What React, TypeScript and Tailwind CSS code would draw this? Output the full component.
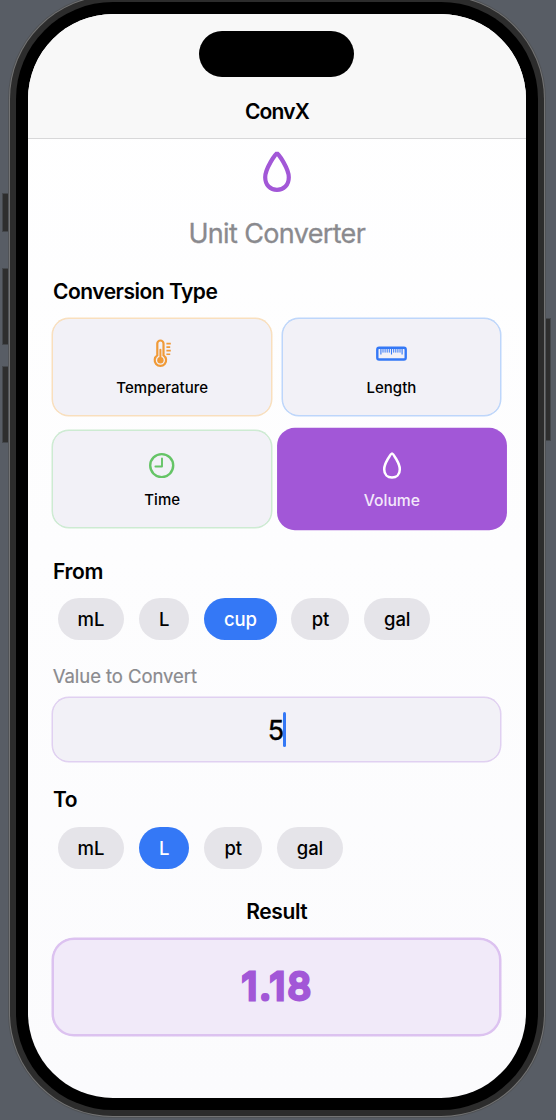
import type { ReactNode } from "react";

function Drop({ className, stroke }: { className: string; stroke: number }) {
  return (
    <svg viewBox="0 0 28 41" fill="none" stroke="currentColor" strokeWidth={stroke} strokeLinejoin="round" className={className}>
      <path d="M14 2.4C12.6 2.4 2.2 17.8 2.2 26.2C2.2 34.2 7.4 38.8 14 38.8S25.8 34.2 25.8 26.2C25.8 17.8 15.4 2.4 14 2.4Z" />
    </svg>
  );
}

function Thermometer() {
  return (
    <svg viewBox="0 0 18 29" fill="none" stroke="currentColor" className="h-[29px] w-[18px] text-[#f09a37]">
      <path d="M4.3 16.4V4.6a3.1 3.1 0 0 1 6.2 0v11.8a5.7 5.7 0 1 1-6.2 0Z" strokeWidth="2.2" />
      <path d="M7.4 10.8v9" strokeWidth="2" strokeLinecap="round" />
      <circle cx="7.4" cy="21.3" r="3.2" fill="currentColor" stroke="none" />
      <path d="M13.4 4.6h4.4M13.4 8.1h3.8M13.4 11.6h4.4M13.4 15.2h3.8" strokeWidth="1.6" />
    </svg>
  );
}

function Ruler() {
  return (
    <svg viewBox="0 0 31 15" fill="none" stroke="currentColor" className="h-[15px] w-[31px] text-[#3478f6]">
      <rect x="1.3" y="1.7" width="28.4" height="11.8" rx="1.8" strokeWidth="2.4" />
      <path d="M4.9 2v6.6M15.5 2v6.6M26.1 2v6.6" strokeWidth="1.1" />
      <path d="M7 2v4.6M9.1 2v4.6M11.2 2v4.6M13.3 2v4.6M17.7 2v4.6M19.8 2v4.6M21.9 2v4.6M24 2v4.6" strokeWidth="1" />
    </svg>
  );
}

function Clock() {
  return (
    <svg viewBox="0 0 26 26" fill="none" stroke="currentColor" className="size-[26px] text-[#65c466]">
      <circle cx="12.7" cy="13.6" r="11.5" strokeWidth="2.4" />
      <path d="M13 6.4v8.1H6.4" strokeWidth="1.9" strokeLinecap="round" strokeLinejoin="round" />
    </svg>
  );
}

function TypeCard({ label, border, children }: { label: string; border: string; children: ReactNode }) {
  return (
    <div className={`flex h-[98px] flex-col items-center rounded-[17px] border bg-[#f2f1f7] pt-[19px] ${border}`}>
      <div className="flex h-[30px] items-center">{children}</div>
      <span className="mt-[10px] text-[15px] leading-[20px] font-medium tracking-[0.02px]">{label}</span>
    </div>
  );
}

const pillWidths: Record<string, string> = {
  mL: "w-[66.5px]",
  L: "w-[50.5px]",
  cup: "w-[72.5px]",
  pt: "w-[58px]",
  gal: "w-[66px]",
};

function Pills({ units, selected }: { units: string[]; selected: string }) {
  return (
    <div className="flex h-[42px] gap-[14.75px] pl-[5.3px]">
      {units.map((u) => (
        <button
          key={u}
          className={`h-[42px] rounded-full pt-px text-[18.5px] font-medium tracking-[-0.1px] ${pillWidths[u]} ${
            u === selected ? "bg-[#3478f6] text-white" : "bg-[#e5e4e9] text-black"
          }`}
        >
          {u}
        </button>
      ))}
    </div>
  );
}

export default function App() {
  return (
    <div className="relative flex h-[1120px] w-[556px] items-start overflow-hidden bg-[#585d65] pl-[8px] font-['Inter',sans-serif] text-black">
      <div className="absolute top-[193px] left-[2px] h-[39px] w-[6px] border-y border-l border-[#44474b] bg-[#2e2e2e]" />
      <div className="absolute top-[268px] left-[2px] h-[77px] w-[6px] border-y border-l border-[#44474b] bg-[#2e2e2e]" />
      <div className="absolute top-[366px] left-[2px] h-[77px] w-[6px] border-y border-l border-[#44474b] bg-[#2e2e2e]" />
      <div className="absolute top-[318px] left-[545px] h-[123px] w-[6px] border-y border-r border-[#44474b] bg-[#2e2e2e]" />

      <div className="relative -mt-[6px] rounded-[105px] bg-[#505357] p-px">
        <div className="rounded-[104px] bg-[#747474] p-px">
          <div className="rounded-[103px] bg-[#2c2c2c] p-[6px]">
            <div className="rounded-[97px] bg-black p-[12px]">
              <div className="flex h-[1084px] w-[498px] flex-col overflow-hidden rounded-[85px] bg-linear-to-b from-white to-[#fbfbfd]">
                <header className="flex h-[125px] shrink-0 flex-col items-center border-b border-[#d8d8d9] bg-[#f8f8f8] pt-[17px]">
                  <div className="mr-px h-[46px] w-[155px] rounded-full bg-black" />
                  <h1 className="mt-[22px] text-[21px] leading-[26px] font-semibold tracking-[-0.8px]">ConvX</h1>
                </header>

                <main className="flex flex-col pr-[24.8px] pl-[24.4px]">
                  <div className="flex justify-center pt-[12px]">
                    <Drop stroke={4.2} className="h-[41px] w-[28px] text-[#a257d7]" />
                  </div>
                  <h2 className="mt-[25px] text-center text-[27px] leading-[34px] tracking-[-0.65px] text-[#8a8a8e] [-webkit-text-stroke:0.3px_#8a8a8e]">Unit Converter</h2>

                  <h3 className="mt-[27px] pl-[0.6px] text-[21px] leading-[28px] font-semibold tracking-[-0.5px]">Conversion Type</h3>
                  <div className="mt-[12px] grid grid-cols-2 gap-x-[9.5px] gap-y-[14px]">
                    <TypeCard label="Temperature" border="border-[#f9dfbd] shadow-[0_0_0_0.5px_#f9dfbd]">
                      <Thermometer />
                    </TypeCard>
                    <TypeCard label="Length" border="border-[#bdd6fb] shadow-[0_0_0_0.5px_#bdd6fb]">
                      <Ruler />
                    </TypeCard>
                    <TypeCard label="Time" border="border-[#cdebd2] shadow-[0_0_0_0.5px_#cdebd2]">
                      <Clock />
                    </TypeCard>
                    <div className="flex h-[98px] scale-[1.045] flex-col items-center rounded-[17px] bg-[#a257d7] pt-[20px] text-white">
                      <div className="flex h-[30px] items-center pt-px">
                        <Drop stroke={3.9} className="h-[26px] w-[18px]" />
                      </div>
                      <span className="mt-[10px] text-[15px] leading-[20px] font-medium text-[#f3e8fa]">Volume</span>
                    </div>
                  </div>

                  <h3 className="mt-[30px] pl-[0.6px] text-[21px] leading-[28px] font-semibold tracking-[-0.3px]">From</h3>
                  <div className="mt-[12px]">
                    <Pills units={["mL", "L", "cup", "pt", "gal"]} selected="cup" />
                  </div>

                  <label className="mt-[24px] pl-[0.4px] text-[18.5px] leading-[25px] tracking-[-0.06px] text-[#8a8a8e] [-webkit-text-stroke:0.2px_#8a8a8e]">Value to Convert</label>
                  <div className="mt-[8px] flex h-[65px] items-center justify-center rounded-[17px] border border-[#e0d0f1] bg-[#f2f1f7] shadow-[0_0_0_0.5px_#e0d0f1]">
                    <span className="pt-[2px] text-[27px] leading-[34px] [-webkit-text-stroke:0.4px_#000]">5</span>
                    <span className="-ml-px h-[35px] w-[2.5px] rounded-full bg-[#3478f6]" />
                  </div>

                  <h3 className="mt-[24px] pl-[0.6px] text-[21px] leading-[28px] font-semibold tracking-[-0.5px]">To</h3>
                  <div className="mt-[13px]">
                    <Pills units={["mL", "L", "pt", "gal"]} selected="L" />
                  </div>

                  <h3 className="mt-[29px] text-center text-[21px] leading-[28px] font-semibold tracking-[-0.4px]">Result</h3>
                  <div className="mt-[12px] flex h-[98px] items-center justify-center rounded-[22px] border-2 border-[#dcc2f0] bg-[#f1eaf9] shadow-[0_0_0_0.5px_#dcc2f0]">
                    <span className="pl-[1.5px] text-[37.5px] leading-[48px] font-medium tracking-[2.2px] text-[#a257d7] [-webkit-text-stroke:3px_#a257d7] [stroke-linejoin:round]">1.18</span>
                  </div>
                </main>
              </div>
            </div>
          </div>
        </div>
      </div>
    </div>
  );
}
